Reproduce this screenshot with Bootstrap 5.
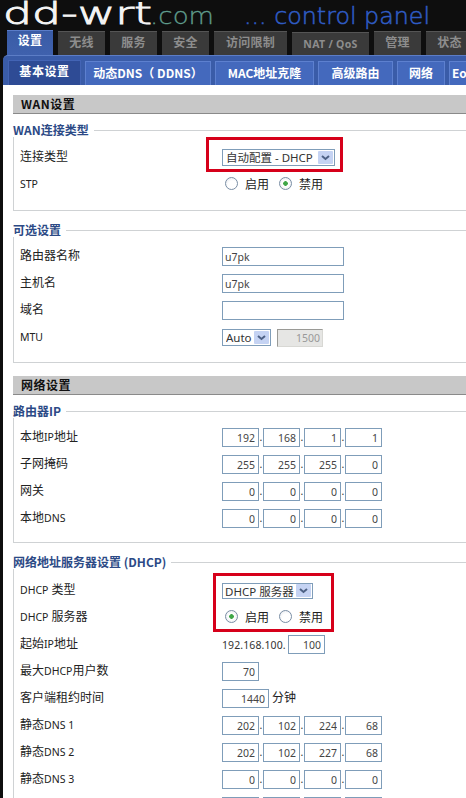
<!doctype html>
<html lang="zh">
<head>
<meta charset="utf-8">
<title>dd-wrt control panel</title>
<link href="https://cdn.jsdelivr.net/npm/bootstrap@5.3.0/dist/css/bootstrap.min.css" rel="stylesheet">
<style>
html,body{margin:0;height:798px;overflow:hidden;background:#0b0b0b}
body{font-family:"Noto Sans","Noto Sans CJK SC",sans-serif;font-size:12px;color:#222;line-height:1}
.shell{position:relative;width:466px;height:798px;overflow:hidden;background:#0e0e0e}
.logo-svg{display:block;width:466px;height:30px}
.tabs-row{display:flex;gap:5px;height:25px;padding-left:7px;align-items:flex-end;width:700px}
.tab-item{height:24px;width:47px;background:#3a3a3a;border-top:1px solid #555;color:#8d8d8d;font:700 12px "Noto Sans CJK SC",sans-serif;display:flex;align-items:center;justify-content:center;padding-bottom:5px;letter-spacing:.3px}
.tab-item.tab-on{width:46px;height:25px;background:linear-gradient(#3a5ca6,#3f61ad);border-top:1px solid #5a7cc8;color:#fff;padding-bottom:7px}
.tab-w74{width:73px}
.tab-nat{width:77px;height:23px;padding-bottom:0;font-family:"Noto Sans",sans-serif;font-size:10.5px}
.sub-bar{margin-left:3px;height:30px;background:#3a5ca8;border-radius:5px 0 0 0;border-top:1px solid #5c7dc6;display:flex;gap:4px;padding-left:5px;align-items:flex-end;width:700px}
.sub-item{height:24px;background:#4469bd;border:1px solid #5d80cf;border-bottom:0;color:#fff;font:700 12px "Noto Sans CJK SC",sans-serif;display:flex;align-items:center;justify-content:center;white-space:nowrap;padding-bottom:2px}
.sub-on{height:25px;width:73px;background:#2e4b95;border-color:#4364b5;padding-bottom:5px;letter-spacing:.6px}
.page-body{margin-left:3px;background:#fff;height:713px;padding:10px 0 0 10px;width:700px}
.sec-bar{height:19px;background:#c8c8c8;border-bottom:1px solid #8a8a8a;font:700 12px "Noto Sans CJK SC",sans-serif;color:#111;padding:0 0 2px 8px;display:flex;align-items:center;letter-spacing:.5px}
.sec-second{margin-top:13px}
.set-box{border:1px solid #cfd2d4;border-right:0;margin:9px 0 0;padding:0 0 0 6px;min-width:0}
.set-box legend{float:none;width:auto;margin:0 0 0 -7px;padding:0 5px 0 0;font:700 12px/14px "Noto Sans CJK SC",sans-serif;color:#2c4a86}
.set-gap{margin-top:12px}
.pad-a{padding-top:7px}
.pad-b{padding-top:6px}
.pad-c{padding-top:8px}
.set-row{display:flex;height:27px;align-items:center}
.set-name{width:202px;flex:none;font-size:12px;color:#222;padding-bottom:1px}
.lat{font-size:10.5px}
.set-ctl{display:flex;align-items:center;gap:0}
.box-in{height:19px;border:1px solid #7f9db9;border-radius:0;background:#fff;color:#444;font:10.5px "Noto Sans",sans-serif;padding:1px 2px;outline:0}
.box-wide{width:122px}
.box-ip{width:37px;text-align:right;padding-right:3px}
.box-lease{width:47px;text-align:right;padding-right:3px}
.box-off{width:46px;height:18px;margin-left:6px;background:#e6e6e4;border-color:#9a9a96 #d8d8d4 #d8d8d4 #9a9a96;color:#999;text-align:right}
.dot-sep{width:4px;text-align:center;font:10.5px "Noto Sans",sans-serif;color:#333;align-self:flex-end;padding-bottom:3px}
.xp-sel{appearance:none;height:17px;border:1px solid #7f9db9;border-radius:0;color:#333;font:11.5px "Noto Sans","Noto Sans CJK SC",sans-serif;padding:0 17px 0 3px;background-color:#fff;background-repeat:no-repeat;background-position:right 1px center;background-size:15px 13px;background-image:url("data:image/svg+xml,%3Csvg xmlns='http://www.w3.org/2000/svg' viewBox='0 0 15 13'%3E%3Crect width='15' height='13' rx='1' fill='%23c5d3f3'/%3E%3Cpath d='M4 5l3.5 3L11 5' fill='none' stroke='%234d6185' stroke-width='2'/%3E%3C/svg%3E")}
.sel-conn{width:113px}
.sel-mtu{width:49px}
.sel-dhcp{width:91px;height:16px;padding-left:2px}
.rad-pick{appearance:none;width:13px;height:13px;border:1px solid #7a8ea5;border-radius:50%;margin:0 0 3px;background:radial-gradient(circle at 60% 65%,#fff 45%,#e1e4ea 100%);flex:none}
.rad-pick:checked{background:radial-gradient(circle,#3fa648 0 2px,#fff 2.6px,#e6e9ee 100%)}
.rad-text{font-size:12px;margin:0 10px 0 7px}
.rad-wrap{margin-left:3px}
.ip-lead{font:10.5px "Noto Sans",sans-serif;color:#333;width:66px;flex:none;white-space:nowrap;letter-spacing:.1px}
.unit-txt{margin-left:3px;padding-bottom:1px}
.fill-a{height:12px}
.fill-b{height:11px}
.fill-c{height:10px}
.note-box{position:absolute;border:3px solid #d6001a;pointer-events:none}
.note-a{left:206px;top:137px;width:137px;height:35px}
.note-b{left:213px;top:573px;width:121px;height:59px}
</style>
</head>
<body>
<div class="shell">
  <svg class="logo-svg" viewBox="0 0 466 30" role="img" aria-label="dd-wrt.com ... control panel">
    <text x="3" y="23.5" font-family="DejaVu Sans" font-weight="200" font-size="30" fill="#f4f4f4" stroke="#f4f4f4" stroke-width=".9" textLength="149" lengthAdjust="spacingAndGlyphs">dd-wrt</text>
    <text x="150" y="24" font-family="DejaVu Sans" font-weight="200" font-size="23" fill="#5f9c8c" stroke="#5f9c8c" stroke-width=".3" textLength="64" lengthAdjust="spacingAndGlyphs">.com</text>
    <text x="244" y="24" font-family="DejaVu Sans" font-weight="200" font-size="23" fill="#2f5cc4" stroke="#2f5cc4" stroke-width=".5" textLength="186" lengthAdjust="spacingAndGlyphs">... control panel</text>
  </svg>
  <div class="tabs-row">
    <div class="tab-item tab-on">设置</div>
    <div class="tab-item">无线</div>
    <div class="tab-item">服务</div>
    <div class="tab-item">安全</div>
    <div class="tab-item tab-w74">访问限制</div>
    <div class="tab-item tab-nat">NAT / QoS</div>
    <div class="tab-item">管理</div>
    <div class="tab-item">状态</div>
  </div>
  <div class="sub-bar">
    <div class="sub-item sub-on">基本设置</div>
    <div class="sub-item" style="width:126px">动态DNS（ DDNS）</div>
    <div class="sub-item" style="width:99px">MAC地址克隆</div>
    <div class="sub-item" style="width:75px">高级路由</div>
    <div class="sub-item" style="width:48px">网络</div>
    <div class="sub-item" style="width:70px;justify-content:flex-start;padding-left:2px">EoIP隧道</div>
  </div>
  <div class="page-body">
    <div class="sec-bar">WAN设置</div>
    <fieldset class="set-box">
      <legend>WAN连接类型</legend>
      <div class="pad-a"></div>
      <div class="set-row"><div class="set-name">连接类型</div><div class="set-ctl"><select class="xp-sel sel-conn"><option>自动配置 - DHCP</option></select></div></div>
      <div class="set-row"><div class="set-name"><span class="lat">STP</span></div><div class="set-ctl rad-wrap"><input class="rad-pick" type="radio" name="stp"><span class="rad-text">启用</span><input class="rad-pick" type="radio" name="stp" checked><span class="rad-text">禁用</span></div></div>
      <div class="fill-a"></div>
    </fieldset>
    <fieldset class="set-box set-gap">
      <legend>可选设置</legend>
      <div class="pad-b"></div>
      <div class="set-row"><div class="set-name">路由器名称</div><div class="set-ctl"><input class="box-in box-wide" value="u7pk"></div></div>
      <div class="set-row"><div class="set-name">主机名</div><div class="set-ctl"><input class="box-in box-wide" value="u7pk"></div></div>
      <div class="set-row"><div class="set-name">域名</div><div class="set-ctl"><input class="box-in box-wide"></div></div>
      <div class="set-row"><div class="set-name"><span class="lat">MTU</span></div><div class="set-ctl"><select class="xp-sel sel-mtu"><option>Auto</option></select><input class="box-in box-off" value="1500" disabled></div></div>
      <div class="fill-b"></div>
    </fieldset>
    <div class="sec-bar sec-second">网络设置</div>
    <fieldset class="set-box">
      <legend>路由器IP</legend>
      <div class="pad-b"></div>
      <div class="set-row"><div class="set-name">本地<span class="lat">IP</span>地址</div><div class="set-ctl"><input class="box-in box-ip" value="192"><span class="dot-sep">.</span><input class="box-in box-ip" value="168"><span class="dot-sep">.</span><input class="box-in box-ip" value="1"><span class="dot-sep">.</span><input class="box-in box-ip" value="1"></div></div>
      <div class="set-row"><div class="set-name">子网掩码</div><div class="set-ctl"><input class="box-in box-ip" value="255"><span class="dot-sep">.</span><input class="box-in box-ip" value="255"><span class="dot-sep">.</span><input class="box-in box-ip" value="255"><span class="dot-sep">.</span><input class="box-in box-ip" value="0"></div></div>
      <div class="set-row"><div class="set-name">网关</div><div class="set-ctl"><input class="box-in box-ip" value="0"><span class="dot-sep">.</span><input class="box-in box-ip" value="0"><span class="dot-sep">.</span><input class="box-in box-ip" value="0"><span class="dot-sep">.</span><input class="box-in box-ip" value="0"></div></div>
      <div class="set-row"><div class="set-name">本地<span class="lat">DNS</span></div><div class="set-ctl"><input class="box-in box-ip" value="0"><span class="dot-sep">.</span><input class="box-in box-ip" value="0"><span class="dot-sep">.</span><input class="box-in box-ip" value="0"><span class="dot-sep">.</span><input class="box-in box-ip" value="0"></div></div>
      <div class="fill-c"></div>
    </fieldset>
    <fieldset class="set-box set-gap">
      <legend>网络地址服务器设置 (DHCP)</legend>
      <div class="pad-c"></div>
      <div class="set-row"><div class="set-name"><span class="lat">DHCP</span> 类型</div><div class="set-ctl"><select class="xp-sel sel-dhcp"><option>DHCP 服务器</option></select></div></div>
      <div class="set-row"><div class="set-name"><span class="lat">DHCP</span> 服务器</div><div class="set-ctl rad-wrap"><input class="rad-pick" type="radio" name="dhcp" checked><span class="rad-text">启用</span><input class="rad-pick" type="radio" name="dhcp"><span class="rad-text">禁用</span></div></div>
      <div class="set-row"><div class="set-name">起始<span class="lat">IP</span>地址</div><div class="set-ctl"><span class="ip-lead">192.168.100.</span><input class="box-in box-ip" value="100"></div></div>
      <div class="set-row"><div class="set-name">最大<span class="lat">DHCP</span>用户数</div><div class="set-ctl"><input class="box-in box-ip" value="70"></div></div>
      <div class="set-row"><div class="set-name">客户端租约时间</div><div class="set-ctl"><input class="box-in box-lease" value="1440"><span class="unit-txt">分钟</span></div></div>
      <div class="set-row"><div class="set-name">静态<span class="lat">DNS 1</span></div><div class="set-ctl"><input class="box-in box-ip" value="202"><span class="dot-sep">.</span><input class="box-in box-ip" value="102"><span class="dot-sep">.</span><input class="box-in box-ip" value="224"><span class="dot-sep">.</span><input class="box-in box-ip" value="68"></div></div>
      <div class="set-row"><div class="set-name">静态<span class="lat">DNS 2</span></div><div class="set-ctl"><input class="box-in box-ip" value="202"><span class="dot-sep">.</span><input class="box-in box-ip" value="102"><span class="dot-sep">.</span><input class="box-in box-ip" value="227"><span class="dot-sep">.</span><input class="box-in box-ip" value="68"></div></div>
      <div class="set-row"><div class="set-name">静态<span class="lat">DNS 3</span></div><div class="set-ctl"><input class="box-in box-ip" value="0"><span class="dot-sep">.</span><input class="box-in box-ip" value="0"><span class="dot-sep">.</span><input class="box-in box-ip" value="0"><span class="dot-sep">.</span><input class="box-in box-ip" value="0"></div></div>
      <div class="set-row"><div class="set-name"></div><div class="set-ctl"><input class="box-in box-ip"><span class="dot-sep"></span><input class="box-in box-ip"><span class="dot-sep"></span><input class="box-in box-ip"><span class="dot-sep"></span><input class="box-in box-ip"></div></div>
    </fieldset>
  </div>
  <div class="note-box note-a"></div>
  <div class="note-box note-b"></div>
</div>
<script src="https://cdn.jsdelivr.net/npm/bootstrap@5.3.0/dist/js/bootstrap.bundle.min.js"></script>
</body>
</html>
